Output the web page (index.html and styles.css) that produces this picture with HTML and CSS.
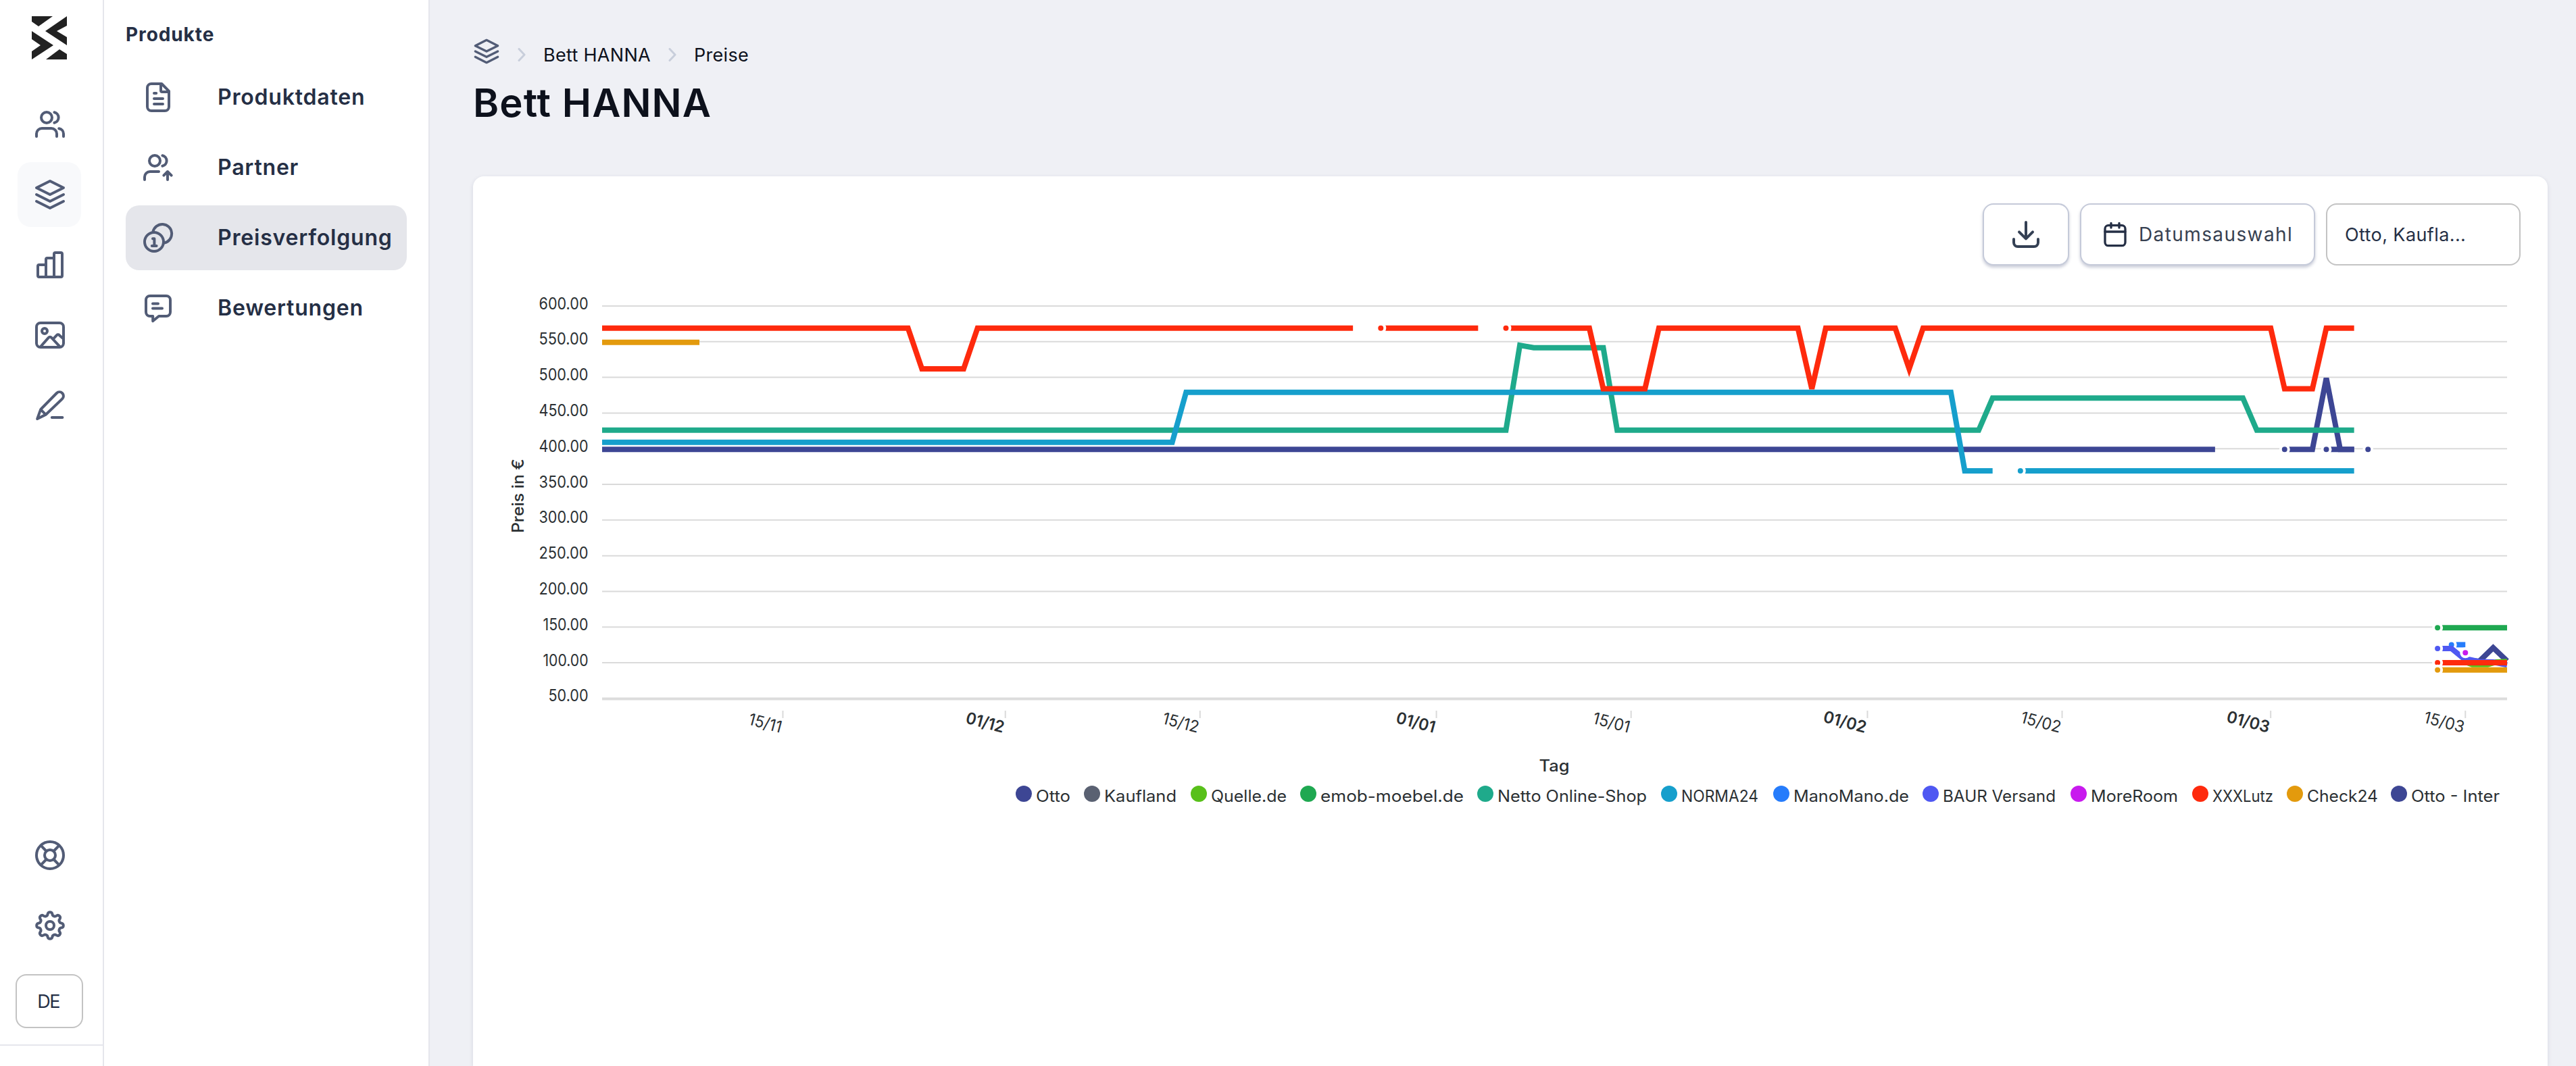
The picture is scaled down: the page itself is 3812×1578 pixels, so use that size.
FILE: index.html
```
<!DOCTYPE html>
<html lang="de">
<head>
    <meta charset="UTF-8">
    <title>Bett HANNA - Preise</title>
    <link rel="stylesheet" href="styles.css">
</head>
<body>
    <aside class="rail">
        <svg class="logo" viewBox="0 0 52 64"><path d="M0 0h31L10 15 0 8zM52 0v14L37 22l15 9v12L20 22zM0 22l32 21L0 64V52l13-9-13-9zM21 64l20-15 11 7v8z"/></svg>
        <nav class="rail-nav">
            <a class="rail-item"><svg class="icon" viewBox="0 0 24 24"><circle cx="9.5" cy="7" r="4"/><path d="M2 21v-2a4 4 0 0 1 4-4h7a4 4 0 0 1 4 4v2M15.2 3.1a4 4 0 0 1 0 7.8M18.6 15.1A4 4 0 0 1 22 19v2"/></svg></a>
            <a class="rail-item active"><svg class="icon" viewBox="0 0 24 24"><path d="M12 2L2 7l10 5 10-5zM2 12l10 5 10-5M2 17l10 5 10-5"/></svg></a>
            <a class="rail-item"><svg class="icon" viewBox="0 0 24 24"><path d="M3 13a1 1 0 0 1 1-1h5v9H4a1 1 0 0 1-1-1zM9 8a1 1 0 0 1 1-1h5v14H9zM15 4a1 1 0 0 1 1-1h4a1 1 0 0 1 1 1v16a1 1 0 0 1-1 1h-5z"/></svg></a>
            <a class="rail-item"><svg class="icon" viewBox="0 0 24 24"><rect x="2" y="3" width="20" height="18" rx="3"/><circle cx="8" cy="9" r="2"/><path d="M5 20.6l6-6.8a1.3 1.3 0 0 1 2 0l6.3 6.8M15 14.2l2-2.1a1.3 1.3 0 0 1 1.9 0l3 2.7"/></svg></a>
            <a class="rail-item"><svg class="icon" viewBox="0 0 24 24"><path d="M2.6 22l2.2-6.2a3 3 0 0 1 .8-1.3L16.9 3a2.9 2.9 0 0 1 4.2 4.2L9.4 18.4a3 3 0 0 1-1.2.8zM5.3 15.3l3.4 3.4M13.4 21h7.8"/></svg></a>
        </nav>
        <nav class="rail-nav bottom">
            <a class="rail-item"><svg class="icon" viewBox="0 0 24 24"><circle cx="12" cy="12" r="10"/><circle cx="12" cy="12" r="4"/><path d="M5.3 4.8l4 4.2M18.7 4.8l-4 4.2M5.3 19.2l4-4.2M18.7 19.2l-4-4.2"/></svg></a>
            <a class="rail-item"><svg class="icon" viewBox="0 0 24 24"><circle cx="12" cy="12" r="3"/><path d="M20.64 10.32A1.75 1.75 0 0 1 20.64 13.68A1.9 1.9 0 0 0 19.3 16.92A1.75 1.75 0 0 1 16.92 19.3A1.9 1.9 0 0 0 13.68 20.64A1.75 1.75 0 0 1 10.32 20.64A1.9 1.9 0 0 0 7.08 19.3A1.75 1.75 0 0 1 4.7 16.92A1.9 1.9 0 0 0 3.36 13.68A1.75 1.75 0 0 1 3.36 10.32A1.9 1.9 0 0 0 4.7 7.08A1.75 1.75 0 0 1 7.08 4.7A1.9 1.9 0 0 0 10.32 3.36A1.75 1.75 0 0 1 13.68 3.36A1.9 1.9 0 0 0 16.92 4.7A1.75 1.75 0 0 1 19.3 7.08A1.9 1.9 0 0 0 20.64 10.32z"/></svg></a>
        </nav>
        <button class="lang-btn">DE</button>
        <div class="rail-footer"></div>
    </aside>

    <aside class="panel">
        <h2>Produkte</h2>
        <nav class="panel-nav">
            <a class="panel-item"><svg class="icon" viewBox="0 0 24 24"><path d="M14.6 2H7a3 3 0 0 0-3 3v14a3 3 0 0 0 3 3h10a3 3 0 0 0 3-3V7.4zM14 2v5a1 1 0 0 0 1 1h5M9 9h1.6M9 13h6.5M9 17h6.5"/></svg><span>Produktdaten</span></a>
            <a class="panel-item"><svg class="icon" viewBox="0 0 24 24"><circle cx="9.5" cy="7" r="4"/><path d="M2 21v-2a4 4 0 0 1 4-4h6.5M15.2 3.1a4 4 0 0 1 0 7.8M19 21v-6M16.2 17.8L19 15l2.8 2.8"/></svg><span>Partner</span></a>
            <a class="panel-item active"><svg class="icon" viewBox="0 0 24 24"><circle cx="9" cy="15" r="7"/><path d="M8.2 7.6A7 7 0 1 1 16.6 15.8M8 12.6h1.2V18M7.4 18h3.4"/></svg><span>Preisverfolgung</span></a>
            <a class="panel-item"><svg class="icon" viewBox="0 0 24 24"><path d="M6 3h12a3 3 0 0 1 3 3v9a3 3 0 0 1-3 3h-5.5l-4.4 3.6V18H6a3 3 0 0 1-3-3V6a3 3 0 0 1 3-3zM8 8.7h4M8 12.2h7"/></svg><span>Bewertungen</span></a>
        </nav>
    </aside>

    <main>
        <div class="breadcrumb">
            <svg class="icon home" viewBox="0 0 24 24"><path d="M12 2L2 7l10 5 10-5zM2 12l10 5 10-5M2 17l10 5 10-5"/></svg>
            <svg class="chevron" viewBox="0 0 12 20"><path d="M2 1.5l8 8.5-8 8.5"/></svg>
            <span>Bett HANNA</span>
            <svg class="chevron" viewBox="0 0 12 20"><path d="M2 1.5l8 8.5-8 8.5"/></svg>
            <span>Preise</span>
        </div>
        <h1>Bett HANNA</h1>
        <section class="card">
            <div class="toolbar">
                <button class="btn download-btn"><svg class="icon" viewBox="0 0 24 24"><path d="M12 3v12M7 10.2l5 5 5-5M3 15.5V18a3 3 0 0 0 3 3h12a3 3 0 0 0 3-3v-2.5"/></svg></button>
                <button class="btn date-btn"><svg class="icon" viewBox="0 0 24 24"><rect x="3" y="4" width="18" height="18" rx="3"/><path d="M3 9.6h18M8.4 2v4M15.6 2v4"/></svg><span>Datumsauswahl</span></button>
                <button class="select-btn">Otto, Kaufla...</button>
            </div>
            <svg class="chart" id="chart" viewBox="740 420 2990 800"></svg>
        </section>
    </main>
    <script src="chart.js"></script>
</body>
</html>
```
FILE: styles.css
```
* { box-sizing: border-box; }
body { margin: 0; display: flex; width: 3812px; height: 1578px; overflow: hidden; background: #eff0f5; color: #252f45; font-family: Inter, "Open Sans", sans-serif; font-size: 27px; }
button { font: inherit; color: inherit; background: #fff; padding: 0; cursor: pointer; }
.icon { width: 48px; height: 48px; flex: none; fill: none; stroke: #525c76; stroke-width: 2; stroke-linecap: round; stroke-linejoin: round; }

.rail { width: 154px; flex: none; display: flex; flex-direction: column; background: #fff; border-right: 2px solid #e5e6ec; }
.logo { width: 52px; height: 64px; margin: 24px 0 48px 47px; fill: #222; flex: none; }
.rail-nav { display: flex; flex-direction: column; gap: 8px; padding-left: 26px; }
.rail-nav.bottom { margin-top: auto; }
.rail-item { display: flex; align-items: center; width: 94px; height: 96px; padding-left: 24px; border-radius: 20px; }
.rail-item.active { background: #f8f9fb; }
.lang-btn { width: 100px; height: 80px; margin: 24px 0 24px 23px; padding-right: 3px; border: 2px solid #c3c3c3; border-radius: 16px; font-size: 27px; flex: none; letter-spacing: -1.5px; }
.rail-footer { height: 32px; border-top: 2px solid #e5e6ec; flex: none; }

.panel { width: 482px; flex: none; padding: 30px 32px; background: #fff; border-right: 2px solid #e5e6ec; }
.panel h2 { margin: 0 0 24px; font-size: 28px; line-height: 42px; font-weight: 700; letter-spacing: 0.9px; }
.panel-nav { display: flex; flex-direction: column; gap: 8px; }
.panel-item { display: flex; align-items: center; gap: 64px; width: 416px; height: 96px; padding-left: 24px; border-radius: 20px; font-size: 32px; font-weight: 600; letter-spacing: 0.8px; }
.panel-item span { padding-bottom: 2px; }
.panel-item.active { background: #e5e6eb; }

main { flex: 1; display: flex; flex-direction: column; padding: 61px 42px 0 64px; color: #0d111c; }
.breadcrumb { display: flex; align-items: center; gap: 26px; height: 40px; letter-spacing: 0.3px; }
.breadcrumb .home { width: 40px; height: 40px; margin-bottom: 10px; }
.chevron { width: 12px; height: 20px; fill: none; stroke: #c8cedb; stroke-width: 3; stroke-linecap: round; stroke-linejoin: round; }
h1 { margin: 15px 0 73px; font-size: 58px; line-height: 72px; font-weight: 600; letter-spacing: 1.1px; }
.card { flex: 1; padding: 40px 40px 0; background: #fff; border-radius: 16px 16px 0 0; box-shadow: 0 2px 6px rgba(30, 40, 80, 0.12); }
.toolbar { display: flex; justify-content: flex-end; gap: 16px; height: 92px; color: #374151; }
.btn { display: flex; align-items: center; border: 2px solid #c5cad9; border-radius: 16px; box-shadow: 0 3px 4px rgba(50, 60, 110, 0.26); }
.btn .icon { stroke: #344054; }
.download-btn { width: 128px; justify-content: center; }
.date-btn { width: 348px; padding-left: 30px; gap: 15px; font-size: 28px; letter-spacing: 1.4px; }
.date-btn .icon { width: 40px; height: 40px; stroke: #252f45; }
.select-btn { width: 288px; padding-left: 26px; text-align: left; color: #252f45; border: 2px solid #c3c3c3; border-radius: 16px; letter-spacing: 0.4px; }

.chart { display: block; width: 2990px; height: 800px; margin-top: 27px; font-size: 24px; fill: #2b3033; }
.grid { stroke: #dadada; stroke-width: 2; }
.axis { stroke: #dcdcdc; stroke-width: 4; }
.line { fill: none; stroke-width: 8; }
.dot { stroke: #fff; stroke-width: 4; }
.title { font-weight: 500; }
.month { font-weight: 600; }
```
FILE: chart.js
```
const chart = document.getElementById("chart");
const left = 891, right = 3710, days = 137;
const x = day => left + day * (right - left) / days;
const y = price => 453 + (600 - price) * 1.0562;
const fit = width => `textLength="${width}" lengthAdjust="spacingAndGlyphs"`;

// each series is a list of segments, each segment a list of [day, price]
const series = [
    { color: "#3d4694", segments: [
        [[0, 399], [116, 399]],
        [[121, 399], [123, 399], [124, 499], [125, 399], [126, 399]],
        [[134, 104], [135, 102], [136, 121], [137, 102.5]]
    ] },
    { color: "#58c01a", segments: [[[134, 101], [134.5, 97.5], [135.6, 97.5], [136.2, 101], [137, 101.7]]] },
    { color: "#1fa851", segments: [[[132, 149], [137, 149]]] },
    { color: "#1faa8b", segments: [[[0, 426], [65, 426], [66, 545], [67, 541.5], [72, 541.5], [73, 426], [99, 426], [100, 471], [118, 471], [119, 426], [126, 426]]] },
    { color: "#169fcc", segments: [
        [[0, 409], [41, 409], [42, 479], [97, 479], [98, 369], [100, 369]],
        [[102, 369], [126, 369]]
    ] },
    { color: "#267cfb", segments: [[[133, 125.3], [134, 125.3]]] },
    { color: "#4f58f2", segments: [[[132, 120], [133, 120], [134, 104], [134.3, 104.5], [135, 101.5], [136, 101], [137, 97]]] },
    { color: "#c81aee", segments: [[[134, 114]]] },
    { color: "#fe2a0d", segments: [
        [[0, 569], [22, 569], [23, 512], [26, 512], [27, 569], [54, 569]],
        [[56, 569], [63, 569]],
        [[65, 569], [71, 569], [72, 484], [75, 484], [76, 569], [86, 569], [87, 484], [88, 569], [93, 569], [94, 512], [95, 569], [120, 569], [121, 484], [123, 484], [124, 569], [126, 569]],
        [[132, 100], [137, 100]]
    ] },
    { color: "#e39a0d", segments: [[[0, 549], [7, 549]], [[132, 89.8], [137, 89.8]]] },
    { color: "#3d4694", segments: [[[124, 399], [126, 399]], [[127, 399]]] }
];

// [label, day, text width]
const dates = [["15/11", 13, 50], ["01/12", 29, 58], ["15/12", 43, 55], ["01/01", 60, 59], ["15/01", 74, 56], ["01/02", 91, 65], ["15/02", 105, 61], ["01/03", 120, 65], ["15/03", 134, 61]];

// [name, color, dot x, text width]
const legend = [
    ["Otto", "#3d4694", 1515, 51], ["Kaufland", "#5a6172", 1616, 107], ["Quelle.de", "#58c01a", 1774, 112],
    ["emob-moebel.de", "#1fa851", 1936, 212], ["Netto Online-Shop", "#1faa8b", 2198, 221], ["NORMA24", "#169fcc", 2470, 114],
    ["ManoMano.de", "#267cfb", 2636, 171], ["BAUR Versand", "#4f58f2", 2857, 167], ["MoreRoom", "#c81aee", 3076, 129],
    ["XXXLutz", "#fe2a0d", 3256, 90], ["Check24", "#e39a0d", 3396, 105], ["Otto - Inter", "#3d4694", 3550, 131]
];

let out = "";
for (let price = 600; price >= 50; price -= 50) {
    if (price > 50) out += `<line class="grid" x1="${left}" x2="${right}" y1="${y(price)}" y2="${y(price)}"/>`;
    const width = price < 100 ? 59 : price < 200 ? 67 : 73;
    out += `<text x="870.5" y="${y(price) + 4.5}" text-anchor="end" ${fit(width)}>${price}.00</text>`;
}
out += `<line class="axis" x1="${left}" x2="${right}" y1="1034.5" y2="1034.5"/>`;

dates.forEach(([label, day, width]) => {
    out += `<line class="grid" x1="${x(day)}" x2="${x(day)}" y1="1052" y2="1063"/>`;
    out += `<text class="${label.startsWith("01") ? "month" : ""}" transform="translate(${x(day) - 4} 1085) rotate(15)" text-anchor="end" ${fit(width)}>${label}</text>`;
});

series.forEach(({ color, segments }) => {
    segments.forEach(points => {
        if (points.length > 1) out += `<polyline class="line" stroke="${color}" points="${points.map(([d, p]) => x(d) + "," + y(p)).join(" ")}"/>`;
    });
    // gaps in the data restart with a dot
    segments.forEach(([[d, p]]) => {
        if (d > 0 && !(d === 134 && p < 110)) out += `<circle class="dot" fill="${color}" cx="${x(d)}" cy="${y(p)}" r="6"/>`;
    });
});

out += `<text class="title" transform="translate(775 734) rotate(-90)" text-anchor="middle" ${fit(110)}>Preis in €</text>`;
out += `<text class="title" x="2300" y="1142" text-anchor="middle" ${fit(45)}>Tag</text>`;
legend.forEach(([name, color, cx, width]) => {
    out += `<circle fill="${color}" cx="${cx}" cy="1175" r="12"/><text x="${cx + 18}" y="1187" ${fit(width)}>${name}</text>`;
});
chart.innerHTML = out;
```
